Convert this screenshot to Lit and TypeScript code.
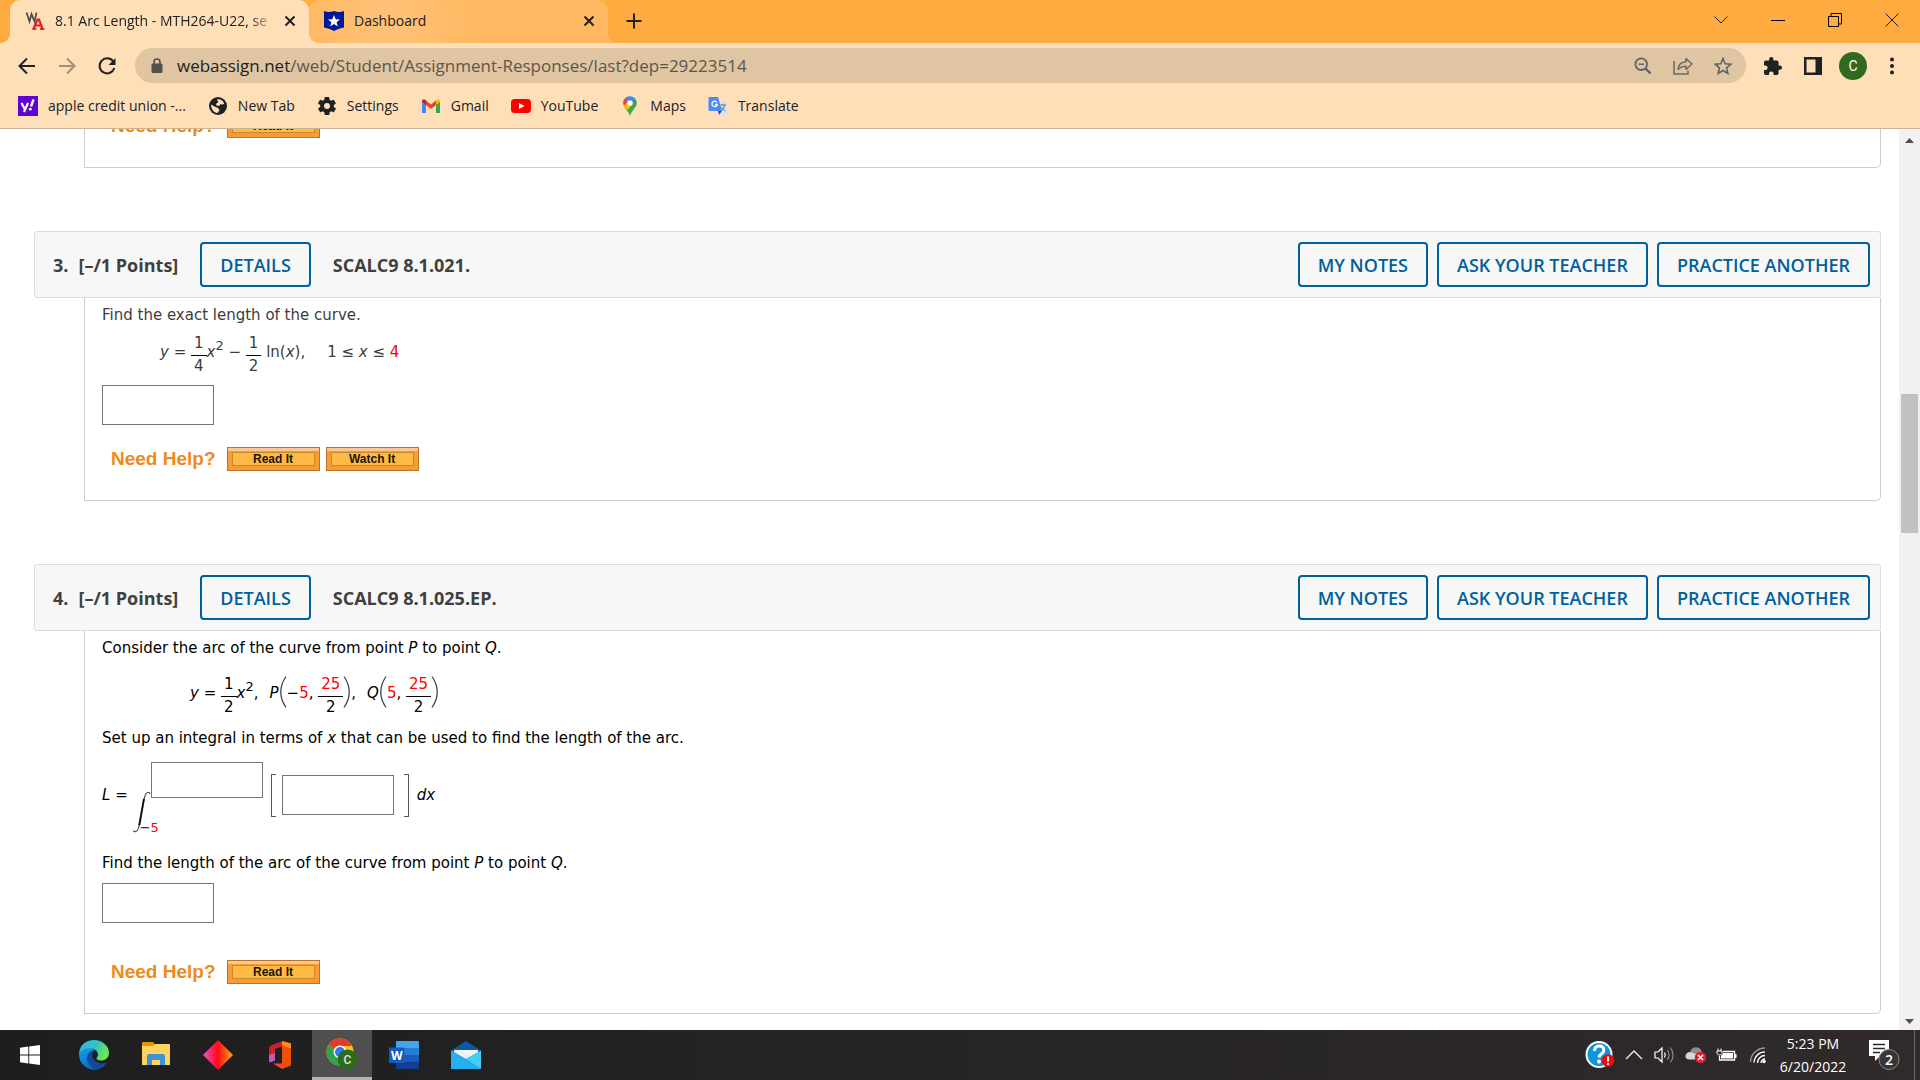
import { LitElement, html, css, svg, nothing } from "lit";
import { customElement, property } from "lit/decorators.js";

const icons = {
  wa: html`<svg width="20" height="20" viewBox="0 0 20 20"><path d="M1.500 1.500L4.500 10.500 6.500 3 9.500 10.500 11.500 1.500" fill="none" stroke="#4a4a4a" stroke-width="1.700"/><path d="M8.500 18L12.500 8.500H14L17.500 18M10.500 14.500H16" fill="none" stroke="#dd2020" stroke-width="2.200"/><path d="M7.500 18h4M15 18h4.500" stroke="#c01414" stroke-width="1.300"/></svg>`,
  shield: html`<svg width="20" height="20" viewBox="0 0 20 20"><path d="M0 0q5 2 10 0q5 2 10 0v16.500q-5 .5-10 3.500q-5-3-10-3.500z" fill="#00189b"/><path d="M10 4l1.700 4.200 4.300.2-3.400 2.800 1.200 4.300-3.800-2.500-3.800 2.500 1.200-4.300-3.400-2.800 4.300-.2z" fill="#fff"/></svg>`,
  close: html`<svg width="12" height="12" viewBox="0 0 12 12"><path d="M1.500 1.500l9 9M10.500 1.500l-9 9" stroke="#202124" stroke-width="2" fill="none"/></svg>`,
  plus: html`<svg width="16" height="16" viewBox="0 0 16 16"><path d="M8 .5v15M.5 8h15" stroke="#202124" stroke-width="2" fill="none"/></svg>`,
  chevron: html`<svg width="14" height="8" viewBox="0 0 14 8"><path d="M.5 .5L7 7 13.500 .5" stroke="#222" fill="none"/></svg>`,
  minimize: html`<svg width="14" height="14" viewBox="0 0 14 14"><path d="M0 7.500h14" stroke="#000" fill="none"/></svg>`,
  restore: html`<svg width="14" height="14" viewBox="0 0 14 14"><path d="M.5 3.500h10v10h-10zM3 3.500v-3h10.500v10.500h-3" stroke="#000" fill="none"/></svg>`,
  closeWin: html`<svg width="14" height="14" viewBox="0 0 14 14"><path d="M.5 .5l13 13M13.500 .5l-13 13" stroke="#222" fill="none"/></svg>`,
  back: html`<svg width="18" height="18" viewBox="0 0 18 18"><path d="M17 9H2M9 1.500L1.500 9 9 16.500" stroke="#202124" stroke-width="2" fill="none"/></svg>`,
  forward: html`<svg width="18" height="18" viewBox="0 0 18 18"><path d="M1 9h15M9 1.500L16.500 9 9 16.500" stroke="#a38f78" stroke-width="2" fill="none"/></svg>`,
  reload: html`<svg width="20" height="20" viewBox="0 0 20 20"><path d="M16 5.200A7.500 7.500 0 1 0 17.300 12" stroke="#202124" stroke-width="2" fill="none"/><path d="M18.500 2v7h-7z" fill="#202124"/></svg>`,
  lock: html`<svg width="12" height="16" viewBox="0 0 12 16"><rect x="0.500" y="5.500" width="11" height="9.500" rx="1.500" fill="#51504f"/><path d="M3 6V4a3 3 0 0 1 6 0v2" stroke="#51504f" stroke-width="1.600" fill="none"/></svg>`,
  zoomOut: html`<svg width="18" height="18" viewBox="0 0 18 18"><circle cx="7.200" cy="7.200" r="5.800" fill="none" stroke="#5f6368" stroke-width="1.800"/><path d="M4.500 7.200h5.500" stroke="#5f6368" stroke-width="1.500"/><path d="M11.500 11.500l5 5" stroke="#5f6368" stroke-width="2.400"/></svg>`,
  share: html`<svg width="20" height="18" viewBox="0 0 20 18"><path d="M1 4v13h14v-3.500" fill="none" stroke="#6a6866" stroke-width="1.500"/><path d="M5 12.500c.5-5 3.500-7.500 8-7.700V1.500l6 5.500-6 5.500V9.200c-3.500 0-6 1-8 3.300z" fill="none" stroke="#6a6866" stroke-width="1.400" stroke-linejoin="round"/></svg>`,
  star: html`<svg width="18" height="18" viewBox="0 0 18 18"><path d="M9 1.500l2.200 5.200 5.600.5-4.200 3.700 1.200 5.500L9 13.500l-4.800 2.900 1.200-5.500L1.200 7.200l5.600-.5z" fill="none" stroke="#5f6368" stroke-width="1.600"/></svg>`,
  puzzle: html`<svg width="18" height="18" viewBox="2 1 21 21"><path d="M20.500 11H19V7a2 2 0 0 0-2-2h-4V3.500a2.500 2.500 0 0 0-5 0V5H4a2 2 0 0 0-2 2v3.800h1.500a2.700 2.700 0 0 1 0 5.400H2V20a2 2 0 0 0 2 2h3.800v-1.500a2.700 2.700 0 0 1 5.400 0V22H17a2 2 0 0 0 2-2v-4h1.500a2.500 2.500 0 0 0 0-5z" fill="#202124"/></svg>`,
  panel: html`<svg width="18" height="18" viewBox="0 0 18 18"><path d="M0 0h18v18H0zM2.500 2.500v13h9v-13z" fill="#202124" fill-rule="evenodd"/></svg>`,
  dots: html`<svg width="4" height="18" viewBox="0 0 4 18"><circle cx="2" cy="2.500" r="2" fill="#202124"/><circle cx="2" cy="9" r="2" fill="#202124"/><circle cx="2" cy="15.500" r="2" fill="#202124"/></svg>`,
  globe: html`<svg width="20" height="20" viewBox="0 0 20 20"><circle cx="10" cy="10" r="9" fill="#202124"/><path d="M9 3.500c2.500-.8 6 .8 7.200 4l-1.700 1.200-2-.6-1.300 1.900-2.700-.5-.5-1.700 2.200-1.300-.4-1.500zM3 8.500l3.500 2 3.500 1.500 1.600 2.200-2.100 2.800C6 17 3 13 3 8.500z" fill="#ffdfb8"/></svg>`,
  gear: html`<svg width="20" height="20" viewBox="1 1 22 22"><path d="M19.400 13c0-.3.100-.6.100-1s0-.7-.1-1l2.100-1.600c.2-.2.200-.4.100-.6l-2-3.500c-.1-.2-.4-.3-.6-.2l-2.500 1c-.5-.4-1.100-.7-1.700-1l-.4-2.600c0-.2-.2-.4-.5-.4h-4c-.2 0-.5.200-.5.400L9 5.100c-.6.300-1.200.6-1.700 1l-2.500-1c-.2-.1-.5 0-.6.200l-2 3.500c-.1.200-.1.500.1.600L4.500 11v2l-2.100 1.600c-.2.200-.2.400-.1.600l2 3.500c.1.200.4.300.6.200l2.500-1c.5.400 1.100.7 1.700 1l.4 2.600c0 .2.200.4.500.4h4c.2 0 .5-.2.500-.4l.4-2.600c.6-.3 1.200-.6 1.700-1l2.500 1c.2.100.5 0 .6-.2l2-3.500c.1-.2.100-.5-.1-.6zM12 15.300a3.300 3.300 0 1 1 0-6.600 3.300 3.300 0 0 1 0 6.600z" fill="#202124"/></svg>`,
  gmail: html`<svg width="20" height="20" viewBox="0 0 20 20"><path d="M1 5v12h4V8z" fill="#4285f4"/><path d="M15 8v9h4V5z" fill="#34a853"/><path d="M15 4.500V9l4-3V5q-1-3-4-.5z" fill="#fbbc04"/><path d="M1 5v1l4 3V4.500Q2 2 1 5z" fill="#c5221f"/><path d="M5 4.500V9l5 4 5-4V4.500l-5 4z" fill="#ea4335"/></svg>`,
  youtube: html`<svg width="20" height="20" viewBox="0 0 20 20"><rect y="3" width="20" height="14" rx="3.500" fill="#f00"/><path d="M8 7l5.500 3L8 13z" fill="#fff"/></svg>`,
  maps: html`<svg width="20" height="20" viewBox="0 0 20 20"><path d="M4.500 11.500C6.500 15 9 16 10 20c1-4 3.500-6 5.500-9 2-3 1.500-6 0-8z" fill="#34a853"/><path d="M4 10c.8 2 2 3 3 4.500L13 8 8 5z" fill="#fbbc04"/><path d="M4.800 2.500C2.500 5 3 8 4 10l5-6z" fill="#ea4335"/><path d="M4.800 2.500C7-.5 13-.8 15.500 3L12 7.500 8 6z" fill="#4285f4"/><circle cx="10" cy="7" r="2.700" fill="#fff"/></svg>`,
  translate: html`<svg width="20" height="20" viewBox="0 0 20 20"><path d="M8 5h11.500v14H11z" fill="#dfe3e8"/><path d="M12 9h6M15 7.500V9M17 9q-1 4-4 6M13.500 11q1.500 3 4 4" stroke="#607d8b" fill="none"/><path d="M10 15h4l-3 4z" fill="#1a4fc4"/><path d="M1.500 1H10l4 14H1.500Q.5 15 .5 14V2q0-1 1-1z" fill="#4c8bf5"/><path d="M9 6.500A2.700 2.700 0 1 0 9.300 8.500H7" stroke="#fff" stroke-width="1.300" fill="none"/></svg>`,
  windows: html`<svg width="20" height="20" viewBox="0 0 20 20"><path d="M0 2.800L8.300 1.600V9.500H0zM9.200 1.500L20 0V9.500H9.200zM0 10.500H8.300V18.400L0 17.200zM9.200 10.500H20V20L9.200 18.500z" fill="#fff"/></svg>`,
  edge: html`<svg width="30" height="30" viewBox="0 0 30 30"><defs><linearGradient id="ea" x1="0" y1="0" x2="1" y2=".4"><stop offset="0" stop-color="#2bb3ee"/><stop offset=".6" stop-color="#35c3bd"/><stop offset="1" stop-color="#6ee455"/></linearGradient><linearGradient id="eb" x1="0" y1="0" x2=".5" y2="1"><stop offset="0" stop-color="#1ba0e6"/><stop offset="1" stop-color="#0668c8"/></linearGradient></defs><path d="M0 13C2 7 10 6 15 10c-3 3-4 7-1 11 3 3.500 9 4 13.500 2A15 15 0 0 1 0 15z" fill="url(#eb)"/><path d="M9 14c2-3 4-4 7-3.500-4 3-3 8 0 10.500 3 2.500 8 3 11.500 2C24 29 18 30.500 13.500 28 8 25 7 18 9 14z" fill="#0e4a96"/><path d="M0 13C1 5 7 0 15 0c8.500 0 15 6 15 13 0 5-4 7.500-8 7.500-3 0-5-1-4.500-2.500 1.500-1.500 2-3 1-5.500C16.500 7.500 5 6 0 13z" fill="url(#ea)"/></svg>`,
  folder: html`<svg width="28" height="26" viewBox="0 0 28 26"><path d="M0 1q0-1 1-1h10l3 4H0z" fill="#dc9a0a"/><path d="M0 4h11l2-2h14q1 0 1 1v20H0z" fill="#ffd45e"/><path d="M5 23V14q0-2 2-2h14q2 0 2 2v9h-5v-5h-8v5z" fill="#3b94dc"/></svg>`,
  diamond: html`<svg width="30" height="30" viewBox="0 0 30 30"><defs><linearGradient id="dg"><stop offset="0" stop-color="#f04fd0"/><stop offset=".5" stop-color="#ff0a12"/><stop offset="1" stop-color="#ffa812"/></linearGradient></defs><path d="M15 0l15 15-15 15L0 15z" fill="url(#dg)"/></svg>`,
  office: html`<svg width="24" height="28" viewBox="0 0 24 28"><path d="M15 0L4 4Q1 5 1 8v12q0 2 2 1l4-1.500V8l7-2.500z" fill="#c8202c"/><path d="M1 14v6q0 2 2 1l4-1.500V12z" fill="#c659b5"/><path d="M14 0l9 2.500v22L14 28z" fill="#ee5009"/><path d="M14 0l9 2.500v5L14 4z" fill="#ff8a1f"/><path d="M5 22.500h9V28z" fill="#f0434d"/></svg>`,
  chrome: html`<svg width="32" height="32" viewBox="0 0 32 32"><circle cx="14" cy="14" r="13.500" fill="#f8c21c"/><path d="M14 14l-11.500-7A13.500 13.500 0 0 0 14 27.500L19 17z" fill="#2da44e"/><path d="M14 14L2.500 7A13.500 13.500 0 0 1 26 8H14z" fill="#e33b2e"/><circle cx="14" cy="14" r="6.500" fill="#fff"/><circle cx="14" cy="14" r="5" fill="#2f7bea"/><circle cx="21.500" cy="21.500" r="10" fill="#2f6b1c"/><text x="21.500" y="26" text-anchor="middle" font-family="Roboto" font-size="12" font-weight="500" fill="#dfe8da">C</text></svg>`,
  word: html`<svg width="30" height="28" viewBox="0 0 30 28"><path d="M8 0h21q1 0 1 1v6H7V1q0-1 1-1z" fill="#41a5ee"/><path d="M7 7h23v7H7z" fill="#2b7cd3"/><path d="M7 14h23v7H7z" fill="#185abd"/><path d="M7 21h23v6q0 1-1 1H8q-1 0-1-1z" fill="#103f91"/><rect y="6.500" width="15.500" height="15.500" rx="1.200" fill="#185abd"/><text x="7.700" y="18.500" text-anchor="middle" font-family="Open Sans" font-size="12" font-weight="700" fill="#fff">W</text></svg>`,
  mail: html`<svg width="30" height="28" viewBox="0 0 30 28"><path d="M15 0l15 9.500V16H0V9.500z" fill="#0a5aa8"/><path d="M3 9h24v6L15 20 3 15z" fill="#f2f2f2"/><path d="M0 9.500L15 18 30 9.500V28H0z" fill="#1a9be6"/><path d="M30 9.500V28L15 18z" fill="#41cdf8"/><path d="M0 28V9.500L30 28z" fill="#27aeee"/></svg>`,
  help: html`<svg width="30" height="28" viewBox="0 0 30 28"><circle cx="14" cy="13.500" r="13.500" fill="#fff"/><circle cx="14" cy="13.500" r="11.500" fill="#0d96d8"/><path d="M9.500 10q0-5 4.700-5 4.600 0 4.600 4 0 2.500-2.600 4-2 1.200-2 3.500" fill="none" stroke="#fff" stroke-width="3"/><circle cx="14" cy="20.500" r="2" fill="#fff"/><circle cx="23" cy="19.500" r="6.300" fill="#f5060c"/><path d="M23 15.500v5M23 22v2" stroke="#fff" stroke-width="2"/></svg>`,
  up: html`<svg width="18" height="10" viewBox="0 0 18 10"><path d="M1 9l8-8 8 8" stroke="#eee" stroke-width="1.400" fill="none"/></svg>`,
  speaker: html`<svg width="22" height="18" viewBox="0 0 22 18"><path d="M1 6h3l4-4v14l-4-4H1z" stroke="#fff" stroke-width="1.200" fill="none"/><path d="M10.500 6.500q1.500 2.500 0 5" stroke="#fff" stroke-width="1.200" fill="none"/><path d="M13.500 4q3 5 0 10M16.500 1.500q5 7.500 0 15" stroke="#8d8889" stroke-width="1.200" fill="none"/></svg>`,
  cloud: html`<svg width="22" height="18" viewBox="0 0 22 18"><path d="M5 6q2-6 8-4.500Q17 3 17 8l-8 5z" fill="#8d8d8d"/><path d="M4 13.500q-4-.5-3.500-4Q1.500 6 5 6l12 4v3.500z" fill="#d6d6d6"/><circle cx="15.500" cy="11.500" r="5.800" fill="#d9222c"/><path d="M13 9l5 5M18 9l-5 5" stroke="#fff" stroke-width="1.500"/></svg>`,
  battery: html`<svg width="22" height="14" viewBox="0 0 22 14"><path d="M7 3.500h11.500v8.500H3.500V8" stroke="#fff" stroke-width="1.300" fill="none"/><path d="M7.500 5H17v5.500H5V8z" fill="#fff"/><path d="M19 6h1.500v4H19z" fill="#fff"/><path d="M1 3h5v2.500L4.500 7h-2L1 5.500zM2 .5V3M5 .5V3" stroke="#fff" fill="#2c2829"/></svg>`,
  wifi: html`<svg width="18" height="18" viewBox="0 0 18 18"><path d="M1.500 16A14.500 14.500 0 0 1 16 2" stroke="#9a9596" stroke-width="1.300" fill="none"/><path d="M5 16.500A11 11 0 0 1 16 5.800M8.500 17A7.500 7.500 0 0 1 16 9.500M12 17a4 4 0 0 1 4-4" stroke="#fff" stroke-width="1.300" fill="none"/><circle cx="15" cy="15.500" r="1.800" fill="#fff"/></svg>`,
  notes: html`<svg width="32" height="32" viewBox="0 0 32 32"><path d="M0 1h20v16h-9l-5 5v-5H0z" fill="#fff"/><path d="M4 5.500h12M4 9.500h12M4 13.500h7" stroke="#2c2829" stroke-width="1.300"/><circle cx="20" cy="20.500" r="10" fill="#3a3637" stroke="#8a8586"/><text x="20" y="25.500" text-anchor="middle" font-family="Open Sans" font-size="14" font-weight="600" fill="#fff">2</text></svg>`,
  yahoo: html`<svg width="20" height="20" viewBox="0 0 20 20"><rect width="20" height="20" fill="#5f01d1"/><path d="M3.500 7l3.200 6M10 7l-4 9" stroke="#fff" stroke-width="2.200" fill="none"/><path d="M15.500 3.500l-2.500 7" stroke="#fff" stroke-width="2.400"/><circle cx="12.300" cy="13.200" r="1.400" fill="#fff"/></svg>`,
  integral: html`<svg width="18" height="42" viewBox="0 0 18 42"><path d="M17 3Q16.500 1 14.500 1.500Q12 2.500 11 9L6.500 32Q5.500 39.500 3 40.500Q1 41 .5 39.500" stroke="#555" stroke-width="1.200" fill="none"/><path d="M11.500 8H10.300L5.700 34H7z" stroke="#111" stroke-width=".6"/></svg>`,
  up6: html`<svg width="9" height="5" viewBox="0 0 9 5"><path d="M4.500 0L9 5H0z" fill="#505050"/></svg>`,
  down6: html`<svg width="9" height="5" viewBox="0 0 9 5"><path d="M4.500 5L9 0H0z" fill="#505050"/></svg>`,
};

const paren = (side: "left" | "right") => html`<svg class="paren" width="8" height="32" viewBox="0 0 8 32">
  ${side === "left"
    ? svg`<path d="M7 .5Q-3.500 16 7 31.500" fill="none" stroke="#444" stroke-width="1.300"/>`
    : svg`<path d="M1 .5Q11.500 16 1 31.500" fill="none" stroke="#444" stroke-width="1.300"/>`}
</svg>`;

const frac = (top: string, bottom: string, red = false) => html`<span class="frac"><span class="num ${red ? "red" : ""}">${top}</span><span>${bottom}</span></span>`;

const helpRow = (items: string[]) => html`<div class="help"><span class="need">Need Help?</span>${items.map((t) => html`<button>${t}</button>`)}</div>`;

@customElement("question-header")
export class QuestionHeader extends LitElement {
  @property() number = "";
  @property() code = "";

  static styles = css`
    :host {
      display: flex;
      align-items: center;
      box-sizing: border-box;
      height: 67px;
      padding: 0 10px 0 18px;
      background: #f7f7f7;
      border: 1px solid #dcdcdc;
      border-radius: 3px;
      font: 700 18px/24px "Open Sans", sans-serif;
      color: #404040;
    }
    .points { margin-left: 10px; }
    .code { margin-left: 22px; flex: 1; }
    .details { margin-left: 22px; }
    .actions { display: flex; gap: 9px; }
    button {
      box-sizing: border-box;
      height: 45px;
      padding: 0 18px;
      border: 2px solid #00609c;
      border-radius: 4px;
      background: transparent;
      color: #00609c;
      font: 600 18px/24px "Open Sans", sans-serif;
    }
  `;

  render() {
    return html`
      <span>${this.number}.</span>
      <span class="points">[–/1 Points]</span>
      <button class="details">DETAILS</button>
      <span class="code">${this.code}</span>
      <div class="actions">
        <button>MY NOTES</button>
        <button>ASK YOUR TEACHER</button>
        <button>PRACTICE ANOTHER</button>
      </div>
    `;
  }
}

@customElement("browser-chrome")
export class BrowserChrome extends LitElement {
  static styles = css`
    :host {
      display: block;
      flex: none;
      background: #ffdfb8;
      border-bottom: 1px solid #cdb394;
      font: 14px/20px "Open Sans", sans-serif;
      color: #202124;
    }
    svg { display: block; flex: none; }
    button { border: 0; padding: 0; background: none; display: grid; place-items: center; }
    .strip { display: flex; height: 43px; background: #ffab40; padding-left: 10px; }
    .tab {
      position: relative;
      box-sizing: border-box;
      width: 299px;
      display: flex;
      align-items: center;
      padding: 0 13px 2px 15px;
      background: var(--tab);
      border-radius: 10px 10px 0 0;
    }
    .tab::before, .tab::after {
      content: "";
      position: absolute;
      bottom: 0;
      width: 10px;
      height: 10px;
    }
    .tab::before { left: -10px; background: radial-gradient(circle at 0 0, transparent 10px, var(--tab) 10px); }
    .tab::after { right: -10px; background: radial-gradient(circle at 100% 0, transparent 10px, var(--tab) 10px); }
    .active { --tab: #ffdfb8; z-index: 1; }
    .idle { --tab: #ffb861; background: radial-gradient(circle at 80px 22px, #ffc27a, #ffb861 90px); }
    .title { flex: 1; margin: 0 8px 0 10px; white-space: nowrap; }
    .active .title { mask-image: linear-gradient(90deg, #000 88%, transparent); }
    .new { width: 52px; padding: 0 0 2px; }
    .win { display: flex; margin-left: auto; padding-bottom: 4px; }
    .win button { width: 57px; }
    .bar { display: flex; align-items: center; height: 45px; padding: 0 10px 0 7px; }
    .nav { width: 40px; height: 36px; }
    .omni {
      flex: 1;
      min-width: 0;
      box-sizing: border-box;
      height: 35px;
      margin-left: 8px;
      padding: 0 3px 0 16px;
      display: flex;
      align-items: center;
      border-radius: 18px;
      background: #dfc5a2;
    }
    .url { flex: 1; margin-left: 14px; font-size: 17px; line-height: 24px; color: #5e564c; }
    .url b { font-weight: 400; color: #202124; }
    .ext { display: flex; margin-left: 7px; }
    .avatar { width: 28px; height: 28px; border-radius: 50%; background: #33691e; color: #fff; display: grid; place-items: center; font: 14px/28px Roboto, sans-serif; }
    .menu { width: 37px; }
    .marks { box-sizing: border-box; display: flex; gap: 22px; align-items: center; height: 40px; padding: 0 18px 4px; }
    .marks a { display: flex; gap: 10px; align-items: center; color: inherit; text-decoration: none; }
  `;

  render() {
    const mark = (icon: unknown, text: string) => html`<a href="#">${icon}<span>${text}</span></a>`;
    const nav = (icon: unknown, label: string) => html`<button class="nav" aria-label=${label}>${icon}</button>`;
    return html`
      <div class="strip">
        <div class="tab active">${icons.wa}<span class="title">8.1 Arc Length - MTH264-U22, se</span><button aria-label="Close tab">${icons.close}</button></div>
        <div class="tab idle">${icons.shield}<span class="title">Dashboard</span><button aria-label="Close tab">${icons.close}</button></div>
        <button class="new" aria-label="New tab">${icons.plus}</button>
        <div class="win">
          <button aria-label="Search tabs">${icons.chevron}</button>
          <button aria-label="Minimize">${icons.minimize}</button>
          <button aria-label="Restore">${icons.restore}</button>
          <button aria-label="Close">${icons.closeWin}</button>
        </div>
      </div>
      <div class="bar">
        ${nav(icons.back, "Back")}${nav(icons.forward, "Forward")}${nav(icons.reload, "Reload")}
        <div class="omni">
          ${icons.lock}
          <span class="url"><b>webassign.net</b>/web/Student/Assignment-Responses/last?dep=29223514</span>
          ${nav(icons.zoomOut, "Zoom")}${nav(icons.share, "Share")}${nav(icons.star, "Bookmark")}
        </div>
        <div class="ext">
          ${nav(icons.puzzle, "Extensions")}${nav(icons.panel, "Side panel")}
          <button class="nav" aria-label="Profile"><span class="avatar">C</span></button>
          <button class="nav menu" aria-label="Menu">${icons.dots}</button>
        </div>
      </div>
      <nav class="marks">
        ${mark(icons.yahoo, "apple credit union -...")}
        ${mark(icons.globe, "New Tab")}
        ${mark(icons.gear, "Settings")}
        ${mark(icons.gmail, "Gmail")}
        ${mark(icons.youtube, "YouTube")}
        ${mark(icons.maps, "Maps")}
        ${mark(icons.translate, "Translate")}
      </nav>
    `;
  }
}

@customElement("task-bar")
export class TaskBar extends LitElement {
  static styles = css`
    :host {
      display: flex;
      flex: none;
      height: 50px;
      background: linear-gradient(90deg, #1e1e1e, #262425 50%, #302a2b);
      color: #fff;
      font: 14px/23px "Open Sans", sans-serif;
    }
    svg { display: block; }
    button { border: 0; padding: 0; background: none; display: grid; place-items: center; box-sizing: border-box; }
    .start { width: 60px; }
    .apps { display: flex; gap: 2px; padding-left: 4px; }
    .apps button { width: 60px; }
    .apps .on { background: #4f4f4f; border-bottom: 3px solid #b5b3ae; }
    .tray { margin-left: auto; display: flex; }
    .tray button { width: 31px; }
    .tray .wide { width: 36px; }
    .clock { width: 80px; text-align: center; padding-top: 2px; }
    .tray .note { width: 54px; padding-left: 10px; }
    .peek { width: 5px; border-left: 1px solid #6d6869; margin-left: 7px; }
  `;

  render() {
    const apps: [string, unknown][] = [
      ["Edge", icons.edge],
      ["File Explorer", icons.folder],
      ["Diamond", icons.diamond],
      ["Office", icons.office],
      ["Chrome", icons.chrome],
      ["Word", icons.word],
      ["Mail", icons.mail],
    ];
    return html`
      <button class="start" aria-label="Start">${icons.windows}</button>
      <div class="apps">
        ${apps.map(([name, icon]) => html`<button class=${name === "Chrome" ? "on" : nothing} aria-label=${name}>${icon}</button>`)}
      </div>
      <div class="tray">
        <button class="wide" aria-label="Help">${icons.help}</button>
        <button aria-label="Hidden icons">${icons.up}</button>
        <button aria-label="Volume">${icons.speaker}</button>
        <button aria-label="OneDrive">${icons.cloud}</button>
        <button aria-label="Battery">${icons.battery}</button>
        <button aria-label="Network">${icons.wifi}</button>
        <div class="clock">5:23 PM<br />6/20/2022</div>
        <button class="note" aria-label="Notifications">${icons.notes}</button>
        <span class="peek"></span>
      </div>
    `;
  }
}

@customElement("app-root")
export class AppRoot extends LitElement {
  static styles = css`
    :host {
      display: flex;
      flex-direction: column;
      height: 100vh;
      overflow: hidden;
      background: #fff;
    }
    .view { flex: 1; min-height: 0; display: flex; }
    main {
      flex: 1;
      min-width: 0;
      overflow: hidden;
      display: flex;
      flex-direction: column;
      justify-content: flex-end;
      gap: 63px;
      padding: 0 18px 16px 34px;
      font: 15px/20px "DejaVu Sans", Verdana, sans-serif;
      color: #000;
    }
    section { flex: none; }
    .body {
      margin-left: 50px;
      padding: 7px 17px 29px;
      border: 1px solid #ccc;
      border-top: 0;
      border-radius: 0 0 5px 0;
    }
    .soft { color: #3c3c3c; }
    p { margin: 0; }
    svg { flex: none; }
    .formula { height: 40px; white-space: nowrap; }
    .f3 { margin: 8px 0 12px; padding-left: 58px; }
    .f4 { margin: 16px 0 14px; padding-left: 88px; }
    .frac {
      display: inline-flex;
      flex-direction: column;
      vertical-align: 9px;
      text-align: center;
      line-height: 20px;
    }
    .num { border-bottom: 1px solid #000; padding: 0 3px 2px; }
    .red { color: #f00; }
    sup { font-size: 13px; line-height: 0; vertical-align: 7px; }
    .gap { padding-left: 22px; }
    .sep { padding-left: 11px; }
    .paren { vertical-align: -10px; }
    input {
      display: block;
      box-sizing: border-box;
      width: 112px;
      height: 40px;
      border: 1px solid #767676;
      background: #fff;
    }
    .integral { display: flex; align-items: center; height: 82px; margin-top: 6px; }
    .sign { align-self: flex-end; padding-bottom: 3px; margin-left: 5px; }
    .sign svg { display: block; }
    .limits { display: flex; flex-direction: column; justify-content: space-between; align-self: stretch; padding-top: 8px; }
    .limits input { height: 36px; }
    .lower { margin-left: -11px; font-size: 13px; line-height: 16px; }
    .bracket { box-sizing: border-box; width: 5px; height: 43px; border: 1px solid #555; }
    .open { border-right: 0; margin: 0 6px 0 8px; }
    .close { border-left: 0; margin: 0 8px 0 10px; }
    .find { margin: 17px 0 10px; }
    .help { display: flex; align-items: center; gap: 6px; height: 24px; margin-top: 22px; padding-left: 9px; }
    .late { margin-top: 37px; }
    .need { margin-right: 5px; font: 700 19px/24px "Liberation Sans", Arial, sans-serif; color: #ef8a1a; }
    .help button {
      box-sizing: border-box;
      width: 93px;
      height: 24px;
      padding: 0;
      border: 1px solid #b5762c;
      background: #fdbb45;
      box-shadow: inset 0 3px 0 #fcc795, inset 0 0 0 4px #fa9a35, inset 0 0 0 5px #c98a2c;
      font: 700 12px/20px "Liberation Sans", Arial, sans-serif;
      color: #1c1400;
    }
    .scroll {
      box-sizing: border-box;
      width: 21px;
      flex: none;
      background: #f1f1f1;
      display: grid;
      grid-template-rows: 22px 243fr 139fr 475fr 22px;
      justify-items: center;
      align-items: center;
    }
    .thumb { grid-row: 3; width: 17px; height: 100%; background: #c1c1c1; }
    .down { grid-row: 5; }
  `;

  render() {
    return html`
      <browser-chrome></browser-chrome>
      <div class="view">
        <main>
          <section><div class="body">${helpRow(["Read It"])}</div></section>

          <section>
            <question-header number="3" code="SCALC9 8.1.021."></question-header>
            <div class="body soft">
              <p>Find the exact length of the curve.</p>
              <div class="formula f3"><i>y</i> = ${frac("1", "4")}<i>x</i><sup>2</sup> − ${frac("1", "2")} ln(<i>x</i>),<span class="gap">1 ≤ <i>x</i> ≤ <span class="red">4</span></span></div>
              <input aria-label="Exact length" />
              ${helpRow(["Read It", "Watch It"])}
            </div>
          </section>

          <section>
            <question-header number="4" code="SCALC9 8.1.025.EP."></question-header>
            <div class="body">
              <p>Consider the arc of the curve from point <i>P</i> to point <i>Q</i>.</p>
              <div class="formula f4"><i>y</i> = ${frac("1", "2")}<i>x</i><sup>2</sup>,<i class="sep">P</i>${paren("left")}−<span class="red">5</span>, ${frac("25", "2", true)}${paren("right")},<i class="sep">Q</i>${paren("left")}<span class="red">5</span>, ${frac("25", "2", true)}${paren("right")}</div>
              <p>Set up an integral in terms of <i>x</i> that can be used to find the length of the arc.</p>
              <div class="integral">
                <span><i>L</i> =</span>
                <span class="sign">${icons.integral}</span>
                <span class="limits"><input aria-label="Upper limit" /><span class="lower">−<span class="red">5</span></span></span>
                <span class="bracket open"></span>
                <input aria-label="Integrand" />
                <span class="bracket close"></span>
                <i>dx</i>
              </div>
              <p class="find">Find the length of the arc of the curve from point <i>P</i> to point <i>Q</i>.</p>
              <input aria-label="Arc length" />
              <div class="late">${helpRow(["Read It"])}</div>
            </div>
          </section>
        </main>
        <div class="scroll">${icons.up6}<span class="thumb"></span><span class="down">${icons.down6}</span></div>
      </div>
      <task-bar></task-bar>
    `;
  }
}
